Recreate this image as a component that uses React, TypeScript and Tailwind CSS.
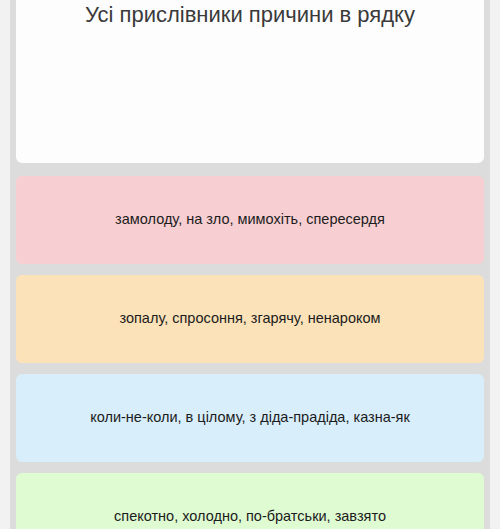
const options = [
  { text: 'замолоду, на зло, мимохіть, спересердя', bg: 'bg-[#f7cfd2]' },
  { text: 'зопалу, спросоння, згарячу, ненароком', bg: 'bg-[#fbe2b8]' },
  { text: 'коли-не-коли, в цілому, з діда-прадіда, казна-як', bg: 'bg-[#d8eefa]' },
  { text: 'спекотно, холодно, по-братськи, завзято', bg: 'bg-[#dffbd2]' },
]

export default function App() {
  return (
    <div className="h-[529px] overflow-hidden bg-[#f2f2f2] px-[10px] font-['Liberation_Sans',Arial,sans-serif]">
      <div className="min-h-full bg-[#dcdcdc] px-[6px] pb-[24px]">
        {/* question card, scrolled so its top is off screen */}
        <div className="-mt-[40px] flex h-[203px] flex-col items-center rounded-b-[6px] bg-[#fdfdfd] pt-[42px]">
          <p className="text-[22px] leading-[26px] text-[#3a3a3a]">Усі прислівники причини в рядку</p>
        </div>

        <div className="mt-[13px] flex flex-col gap-[11px]">
          {options.map((o) => (
            <div
              key={o.text}
              className={`flex h-[88px] shrink-0 items-center justify-center rounded-[6px] ${o.bg} text-[14.5px] text-[#1c1c1c]`}
            >
              {o.text}
            </div>
          ))}
        </div>
      </div>
    </div>
  )
}
